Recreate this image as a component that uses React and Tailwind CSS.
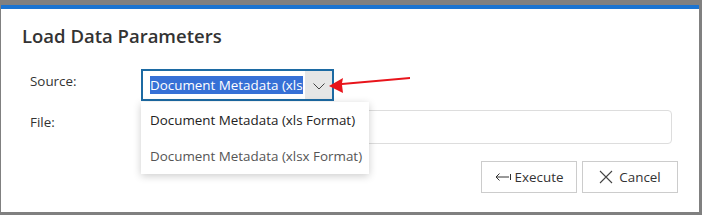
import React from "react";

const font = { fontFamily: '"Open Sans", "Noto Sans", sans-serif' };

function Chevron() {
  return (
    <svg width="12" height="7" viewBox="0 0 12 7" fill="none">
      <path d="M0.5 0.5 L6 6 L11.5 0.5" stroke="#444" strokeWidth="1" />
    </svg>
  );
}

function RedArrow() {
  return (
    <svg
      className="absolute left-[-6px] top-[-1px] pointer-events-none"
      width="84"
      height="24"
      viewBox="0 0 84 24"
    >
      <path d="M1 16 L15 8 L14 13 L82 7 L82 9 L14 15 L15 23 Z" fill="#e8141b" />
    </svg>
  );
}

function ExecuteIcon() {
  return (
    <svg width="17" height="10" viewBox="0 0 17 10" fill="none" stroke="#333" strokeWidth="1">
      <path d="M1 5 H14" />
      <path d="M4.5 1.5 L1 5 L4.5 8.5" />
      <path d="M15.5 2 V8" />
    </svg>
  );
}

function CancelIcon() {
  return (
    <svg width="14" height="14" viewBox="0 0 14 14" fill="none" stroke="#444" strokeWidth="1.1">
      <path d="M1 1 L13 13 M13 1 L1 13" />
    </svg>
  );
}

export default function App() {
  return (
    <div className="w-[702px] h-[215px] bg-[#808080] pt-[5px] pl-px pr-[3px] pb-[3px]" style={font}>
      <div className="h-full bg-white border-t-[4px] border-[#1b74d1] relative">
        <h1 className="pl-[21px] pt-[13px] text-[18.5px] leading-[28px] font-semibold text-[#333]">
          Load Data Parameters
        </h1>

        <div className="mt-[19px] grid grid-cols-[111px_1fr] pl-[29px] pr-[27px] gap-y-[9px] text-[13.4px] text-[#333]">
          <div className="leading-[24px]">Source:</div>
          <div className="relative w-[193px] h-[32px]">
            <div className="h-full border-2 border-[#1c6aa3] flex items-stretch">
              <div className="flex-1 flex items-center pl-[7px] overflow-hidden">
                <span className="bg-[#3670d6] text-white leading-[18px] whitespace-nowrap">
                  Document Metadata (xls
                </span>
              </div>
              <div className="w-[27px] bg-[#e6e6e6] flex items-center justify-center pt-[2px]">
                <Chevron />
              </div>
            </div>
            <div className="absolute left-full top-[2px]">
              <RedArrow />
            </div>
            <div className="absolute left-0 top-[33px] w-[228px] bg-white shadow-[0_2px_8px_rgba(0,0,0,0.2)] z-10">
              <div className="h-[36px] flex items-center pl-[9px] text-[#222] whitespace-nowrap">
                Document Metadata (xls Format)
              </div>
              <div className="h-[36px] flex items-center pl-[9px] text-[#555] whitespace-nowrap">
                Document Metadata (xlsx Format)
              </div>
            </div>
          </div>

          <div className="leading-[24px]">File:</div>
          <div className="h-[34px] border border-[#ddd] rounded-[4px]" />
        </div>

        <div className="flex justify-end gap-[5px] pr-[21px] mt-[17px]">
          <button className="w-[96px] h-[32px] border border-[#ccc] bg-white flex items-center justify-center gap-[3px] text-[13.4px] text-[#333]">
            <ExecuteIcon />
            Execute
          </button>
          <button className="w-[96px] h-[32px] border border-[#ccc] bg-white flex items-center justify-center gap-[6px] text-[13.4px] text-[#333]">
            <CancelIcon />
            Cancel
          </button>
        </div>
      </div>
    </div>
  );
}
